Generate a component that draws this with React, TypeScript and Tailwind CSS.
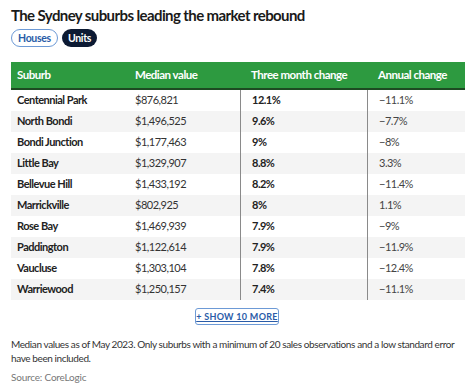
import React from 'react';

const rows = [
  { suburb: 'Centennial Park', median: '$876,821', three: '12.1%', annual: '−11.1%' },
  { suburb: 'North Bondi', median: '$1,496,525', three: '9.6%', annual: '−7.7%' },
  { suburb: 'Bondi Junction', median: '$1,177,463', three: '9%', annual: '−8%' },
  { suburb: 'Little Bay', median: '$1,329,907', three: '8.8%', annual: '3.3%' },
  { suburb: 'Bellevue Hill', median: '$1,433,192', three: '8.2%', annual: '−11.4%' },
  { suburb: 'Marrickville', median: '$802,925', three: '8%', annual: '1.1%' },
  { suburb: 'Rose Bay', median: '$1,469,939', three: '7.9%', annual: '−9%' },
  { suburb: 'Paddington', median: '$1,122,614', three: '7.9%', annual: '−11.9%' },
  { suburb: 'Vaucluse', median: '$1,303,104', three: '7.8%', annual: '−12.4%' },
  { suburb: 'Warriewood', median: '$1,250,157', three: '7.4%', annual: '−11.1%' },
];

const cols = 'grid grid-cols-[113px_116px_127px_98px]';

export default function App() {
  return (
    <div
      className="w-[474px] h-[388px] bg-white px-[11px] pt-[5px] text-[#222]"
      style={{ fontFamily: 'Lato, "Open Sans", sans-serif' }}
    >
      <h1 className="text-[15px] font-bold leading-[20px] tracking-[-0.6px] text-[#1a1a1a]">
        The Sydney suburbs leading the market rebound
      </h1>

      <div className="mt-[4px] flex gap-[4px]">
        <button className="h-[18px] rounded-full border border-[#6d9ad6] bg-white px-[6px] text-[10.5px] font-bold leading-none tracking-[-0.3px] text-[#2a5ca8]">
          Houses
        </button>
        <button className="h-[18px] rounded-full bg-[#0c1a33] px-[6px] text-[10.5px] font-bold leading-none tracking-[-0.3px] text-white">
          Units
        </button>
      </div>

      {/* Table */}
      <div className="mt-[15px] w-[454px] tracking-[-0.5px]">
        <div className={`${cols} h-[28px] items-center border-b-2 border-[#1d4a22] bg-[#2d9a40] text-[11.5px] font-bold text-white`}>
          <div className="pl-[6px]">Suburb</div>
          <div className="pl-[11px]">Median value</div>
          <div className="pl-[11px]">Three month change</div>
          <div className="pl-[11px]">Annual change</div>
        </div>
        {rows.map((r, i) => (
          <div
            key={r.suburb}
            className={`${cols} h-[21px] items-stretch text-[11px] ${i % 2 === 1 ? 'bg-[#f4f4f4]' : 'bg-white'}`}
          >
            <div className="flex items-center pl-[6px] font-bold text-[#222]">{r.suburb}</div>
            <div className="flex items-center pl-[11px] text-[#333]">{r.median}</div>
            <div className="flex items-center border-l border-[#8a8a8a] pl-[11px] font-bold text-[#222]">
              {r.three}
            </div>
            <div className="flex items-center border-l border-[#8a8a8a] pl-[11px] text-[#444]">
              {r.annual}
            </div>
          </div>
        ))}
      </div>

      <div className="mt-[8px] flex justify-center">
        <button className="h-[17px] w-[84px] whitespace-nowrap rounded-[3px] border border-[#6d9ad6] bg-white text-[9px] font-bold leading-none tracking-[0.3px] text-[#2a5ca8] underline">
          + SHOW 10 MORE
        </button>
      </div>

      <p className="mt-[12px] text-[10px] leading-[14px] tracking-[-0.4px] text-[#333]">
        Median values as of May 2023. Only suburbs with a minimum of 20 sales observations and a low standard error
        have been included.
      </p>
      <p className="mt-[5px] text-[10px] leading-[14px] tracking-[-0.2px] text-[#777]">Source: CoreLogic</p>
    </div>
  );
}
